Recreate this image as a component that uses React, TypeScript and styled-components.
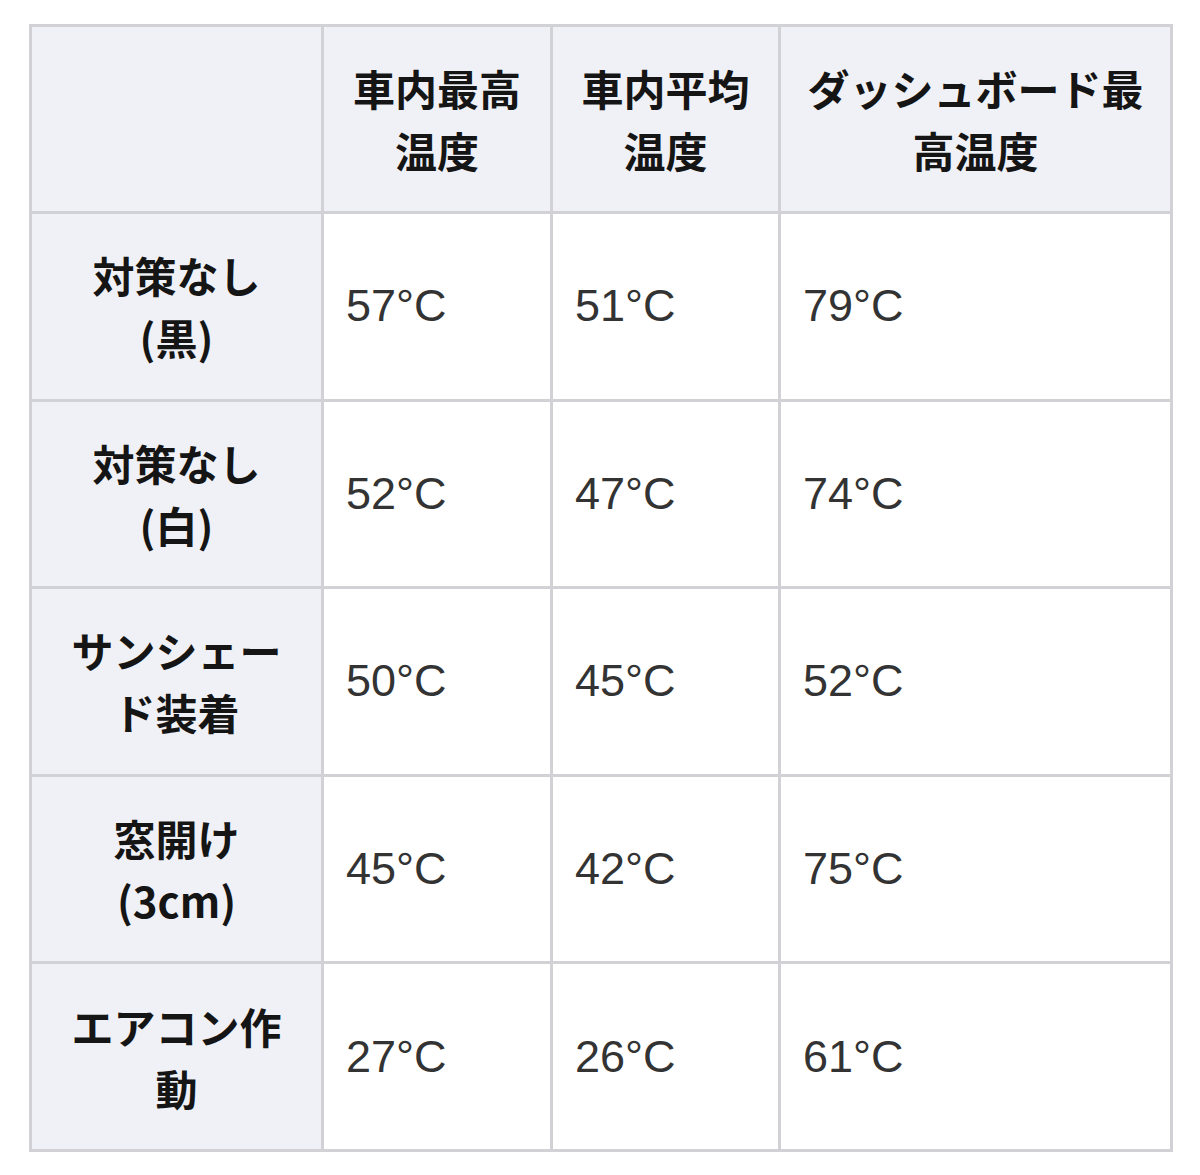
import React from "react";
import styled, { createGlobalStyle } from "styled-components";

const Global = createGlobalStyle`
  html, body { margin: 0; padding: 0; background: #ffffff; }
  body { font-family: "Noto Sans CJK JP", "Noto Sans", sans-serif; }
`;

const Page = styled.div`
  padding: 24px 0 0 29px;
`;

const Table = styled.table`
  border-collapse: collapse;
  table-layout: fixed;
  width: 1141px;
  border: 3px solid #d2d2d6;
`;

const Col = styled.col<{ $w: number }>`
  width: ${(p) => p.$w}px;
`;

const HeadCell = styled.th`
  background: #f0f1f6;
  border: 3px solid #d2d2d6;
  color: #151515;
  font-family: "Noto Sans CJK JP", sans-serif;
  font-weight: 700;
  font-size: 42px;
  line-height: 62px;
  text-align: center;
  vertical-align: middle;
  padding: 30px 20px;
  height: 123px;
`;

const RowHead = styled(HeadCell)`
  padding: 30px 22px;
  height: 124.6px;
`;

const Cell = styled.td`
  background: #ffffff;
  border: 3px solid #d2d2d6;
  color: #333333;
  font-family: "Liberation Sans", "Noto Sans", sans-serif;
  font-weight: 400;
  font-size: 45px;
  line-height: 62px;
  text-align: left;
  vertical-align: middle;
  padding: 30px 22px;
  height: 124.6px;
`;

const columns = [292, 229, 228, 392];

const headers: string[][] = [
  ["車内最高", "温度"],
  ["車内平均", "温度"],
  ["ダッシュボード最", "高温度"],
];

const rows: { label: string[]; values: string[] }[] = [
  { label: ["対策なし", "(黒)"], values: ["57°C", "51°C", "79°C"] },
  { label: ["対策なし", "(白)"], values: ["52°C", "47°C", "74°C"] },
  { label: ["サンシェー", "ド装着"], values: ["50°C", "45°C", "52°C"] },
  { label: ["窓開け", "(3cm)"], values: ["45°C", "42°C", "75°C"] },
  { label: ["エアコン作", "動"], values: ["27°C", "26°C", "61°C"] },
];

const Lines = ({ parts }: { parts: string[] }) => (
  <>
    {parts.map((p, i) => (
      <React.Fragment key={i}>
        {i > 0 && <br />}
        {p}
      </React.Fragment>
    ))}
  </>
);

export default function App() {
  return (
    <>
      <Global />
      <Page>
        <Table>
          <colgroup>
            {columns.map((w, i) => (
              <Col key={i} $w={w} />
            ))}
          </colgroup>
          <thead>
            <tr>
              <HeadCell />
              {headers.map((h, i) => (
                <HeadCell key={i}>
                  <Lines parts={h} />
                </HeadCell>
              ))}
            </tr>
          </thead>
          <tbody>
            {rows.map((r, i) => (
              <tr key={i}>
                <RowHead scope="row">
                  <Lines parts={r.label} />
                </RowHead>
                {r.values.map((v, j) => (
                  <Cell key={j}>{v}</Cell>
                ))}
              </tr>
            ))}
          </tbody>
        </Table>
      </Page>
    </>
  );
}
